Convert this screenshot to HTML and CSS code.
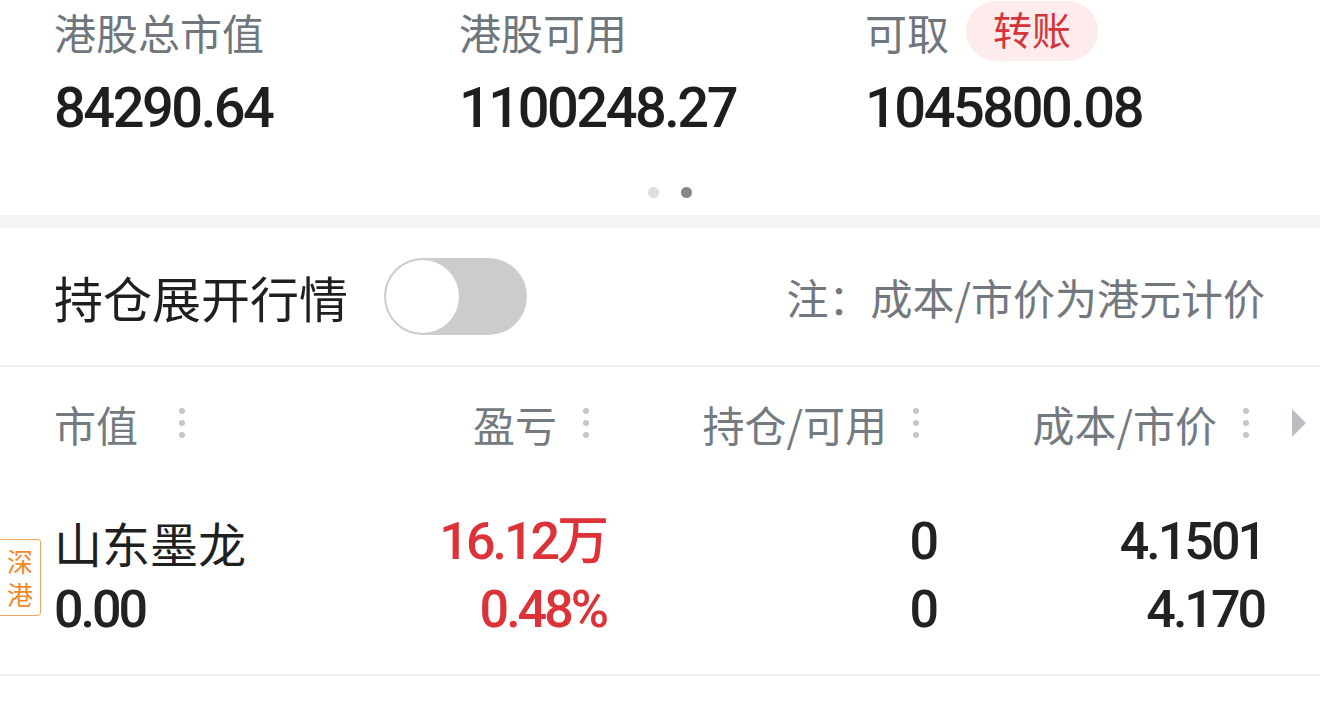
FILE: index.html
```html
<!DOCTYPE html>
<html lang="zh-CN">
<head>
  <meta charset="UTF-8">
  <title>港股持仓</title>
  <meta name="viewport" content="width=device-width, initial-scale=1">
  <link rel="stylesheet" href="styles.css">
</head>
<body>

  <div class="summary">
    <div class="cell">
      <div class="label">港股总市值</div>
      <div class="value">84290.64</div>
    </div>
    <div class="cell">
      <div class="label">港股可用</div>
      <div class="value">1100248.27</div>
    </div>
    <div class="cell">
      <div class="label">可取 <span class="pill">转账</span></div>
      <div class="value">1045800.08</div>
    </div>
  </div>

  <div class="pager">
    <span class="dot"></span>
    <span class="dot active"></span>
  </div>

  <div class="band"></div>

  <div class="toggle-row">
    <div class="toggle-left">
      <span class="toggle-label">持仓展开行情</span>
      <span class="switch"><span class="knob"></span></span>
    </div>
    <span class="note">注：成本/市价为港元计价</span>
  </div>

  <div class="table">
    <div class="thead">
      <div class="th first">市值 <svg class="kebab" width="6" height="30" viewBox="0 0 6 30"><circle cx="3" cy="3" r="3"/><circle cx="3" cy="15" r="3"/><circle cx="3" cy="27" r="3"/></svg></div>
      <div class="th">盈亏 <svg class="kebab" width="6" height="30" viewBox="0 0 6 30"><circle cx="3" cy="3" r="3"/><circle cx="3" cy="15" r="3"/><circle cx="3" cy="27" r="3"/></svg></div>
      <div class="th">持仓/可用 <svg class="kebab" width="6" height="30" viewBox="0 0 6 30"><circle cx="3" cy="3" r="3"/><circle cx="3" cy="15" r="3"/><circle cx="3" cy="27" r="3"/></svg></div>
      <div class="th">成本/市价 <svg class="kebab" width="6" height="30" viewBox="0 0 6 30"><circle cx="3" cy="3" r="3"/><circle cx="3" cy="15" r="3"/><circle cx="3" cy="27" r="3"/></svg></div>
      <div class="th-more"><svg width="14" height="30" viewBox="0 0 14 30"><polygon points="0,1 14,15 0,29"/></svg></div>
    </div>

    <div class="trow">
      <span class="tag">深港</span>
      <div class="td first">
        <span class="name">山东墨龙</span>
        <span class="num">0.00</span>
      </div>
      <div class="td up">
        <span class="num">16.12万</span>
        <span class="num">0.48%</span>
      </div>
      <div class="td">
        <span class="num">0</span>
        <span class="num">0</span>
      </div>
      <div class="td last">
        <span class="num">4.1501</span>
        <span class="num">4.170</span>
      </div>
      <div></div>
    </div>
  </div>

</body>
</html>
```

FILE: styles.css
```css
* { box-sizing: border-box; }

body {
  margin: 0;
  background: #fff;
  font-family: "Noto Sans CJK SC", sans-serif;
  color: #1f1f1f;
  overflow: hidden;
}

.summary {
  display: grid;
  grid-template-columns: 405px 406px 1fr;
  padding-left: 54px;
}

.label {
  display: flex;
  align-items: center;
  height: 62px;
  font-size: 42px;
  line-height: 61px;
  color: #6f767c;
  gap: 17px;
}

.pill {
  display: inline-flex;
  align-items: center;
  justify-content: center;
  height: 60px;
  padding: 0 27px 6px;
  border-radius: 30px;
  background: #fdeceb;
  color: #d5343b;
  font-size: 39px;
  line-height: 54px;
}

.value {
  height: 62px;
  margin-top: 15px;
  line-height: 62px;
  font-family: Roboto, "Noto Sans CJK SC", sans-serif;
  font-size: 56px;
  font-weight: 500;
  letter-spacing: -2.5px;
  color: #1e1e1e;
}

.pager {
  display: flex;
  justify-content: center;
  gap: 22px;
  padding-left: 20px;
  margin-top: 48px;
  height: 28px;
}

.dot {
  width: 11px;
  height: 11px;
  border-radius: 50%;
  background: #dddddd;
}

.dot.active {
  background: #858585;
}

.band {
  height: 13px;
  background: #f4f4f4;
}

.toggle-row {
  display: flex;
  align-items: center;
  justify-content: space-between;
  height: 139px;
  padding: 0 55px 0 54px;
  border-bottom: 2px solid #efefef;
}

.toggle-left {
  display: flex;
  align-items: center;
  gap: 36px;
}

.toggle-label {
  font-size: 49px;
  color: #1f1f1f;
}

.switch {
  display: flex;
  width: 143px;
  height: 77px;
  padding: 2px;
  border-radius: 39px;
  background: #cccccc;
}

.knob {
  width: 73px;
  height: 73px;
  border-radius: 50%;
  background: #fff;
}

.note {
  font-size: 42px;
  color: #72787e;
}

.thead, .trow {
  display: grid;
  grid-template-columns: 276px 276px 330px 330px 1fr;
  padding-left: 54px;
}

.thead {
  height: 112px;
  align-items: center;
}

.th {
  display: flex;
  align-items: center;
  justify-content: flex-end;
  gap: 26px;
  padding-right: 17px;
  font-size: 42px;
  color: #737a80;
}

.th.first {
  justify-content: flex-start;
  gap: 41px;
}

.kebab {
  fill: #c6c6c6;
}

.th-more {
  padding-left: 26px;
  display: flex;
  align-items: center;
}

.th-more polygon {
  fill: #b9bdc1;
}

.trow {
  position: relative;
  padding-top: 29px;
  padding-bottom: 30px;
  border-bottom: 2px solid #eeeeee;
}

.td {
  display: flex;
  flex-direction: column;
  align-items: flex-end;
}

.td.first {
  align-items: flex-start;
}

.td.last {
  padding-right: 2px;
}

.td span {
  height: 68px;
  line-height: 68px;
}

.name {
  font-size: 48px;
  color: #1f1f1f;
}

.num {
  font-family: Roboto, "Noto Sans CJK SC", sans-serif;
  font-size: 52px;
  font-weight: 500;
  letter-spacing: -3px;
  color: #222;
}

.td.up .num {
  color: #dd3238;
}

.tag {
  position: absolute;
  left: -2px;
  top: 60px;
  width: 43px;
  height: 77px;
  border: 1.5px solid #f2a75c;
  border-radius: 3px;
  color: #f0892a;
  font-size: 26px;
  line-height: 33px;
  padding: 4px 0 0 8px;
  word-break: break-all;
}
```
